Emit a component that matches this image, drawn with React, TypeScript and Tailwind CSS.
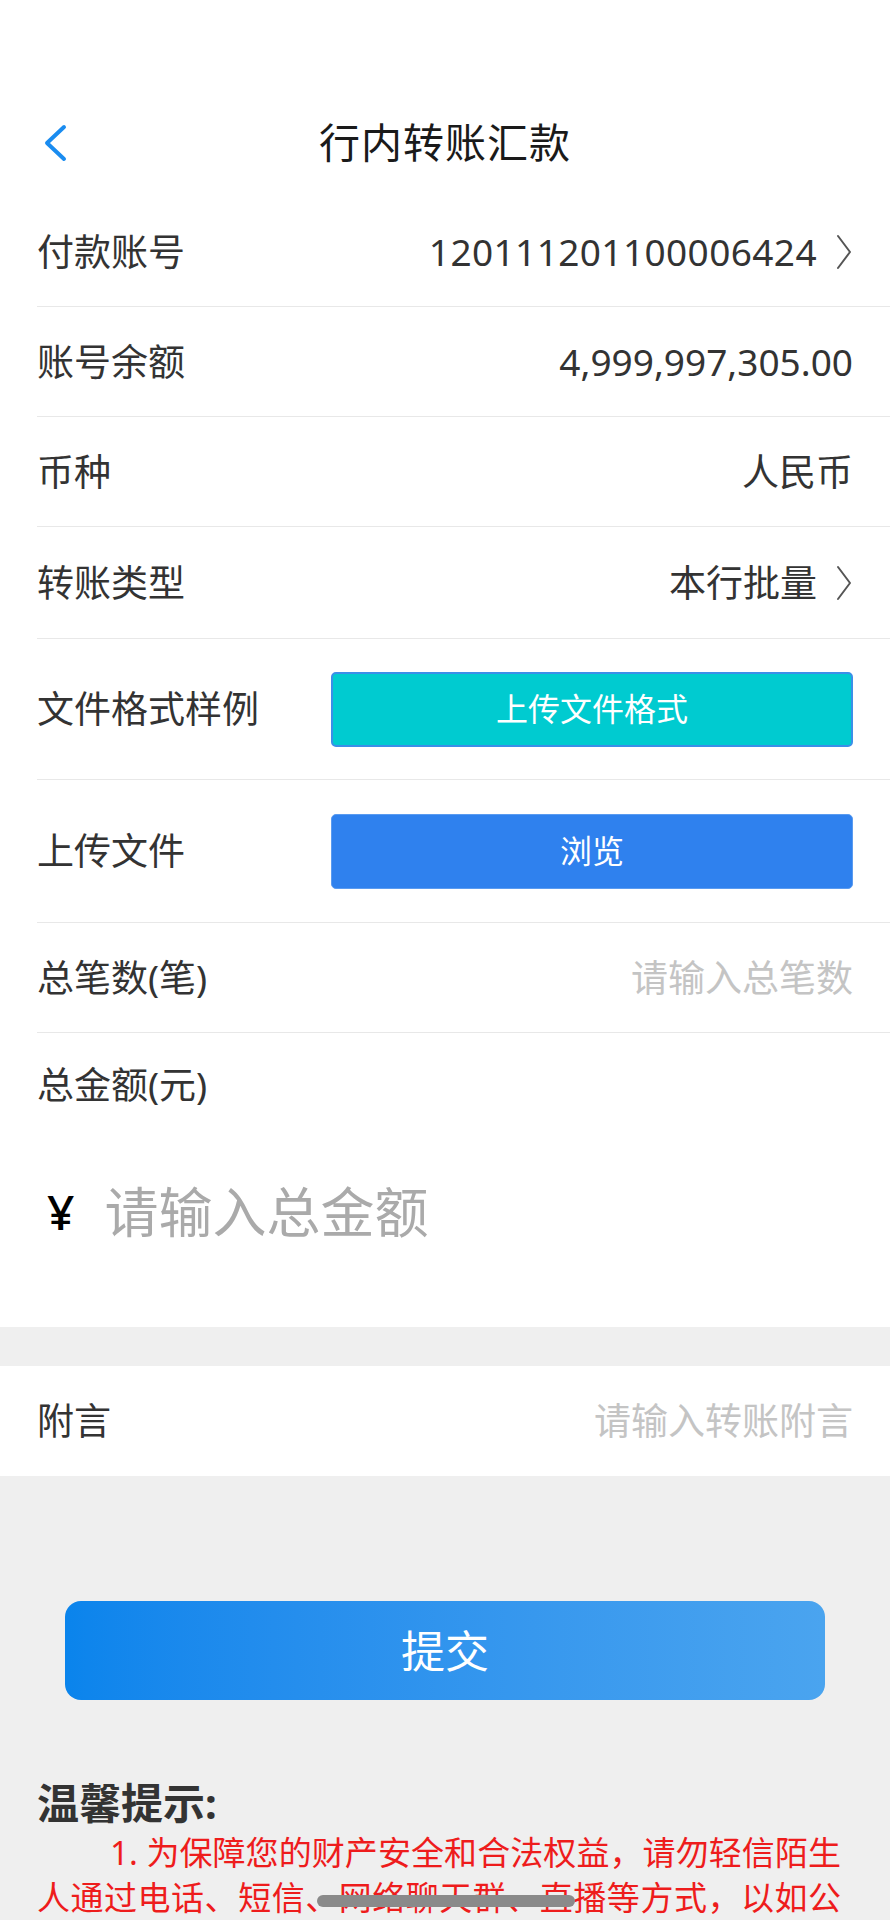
import React from 'react';

const font = { fontFamily: '"Noto Sans", "Noto Sans CJK SC", sans-serif' };

function Chevron() {
  return (
    <svg width="18" height="36" viewBox="0 0 18 36" className="ml-[18px] shrink-0">
      <path d="M3 2 L15 18 L3 34" fill="none" stroke="#555" strokeWidth="2" strokeLinecap="round" strokeLinejoin="round" />
    </svg>
  );
}

function Row({ label, children, h = 'h-[110px]' }: { label: string; children?: React.ReactNode; h?: string }) {
  return (
    <div className={`ml-[37px] pr-[37px] flex items-center justify-between border-b border-[#e8e8e8] ${h}`}>
      <span className="text-[37px] text-[#333] whitespace-nowrap">{label}</span>
      {children}
    </div>
  );
}

export default function App() {
  return (
    <div className="relative h-[1920px] w-[890px] overflow-hidden bg-[#efefef]" style={font}>
      <div className="bg-white">
        <div className="h-[88px]" />
        <header className="relative h-[110px] flex items-center justify-center">
          <svg width="26" height="38" viewBox="0 0 26 38" className="absolute left-[42px] top-[36px]">
            <path d="M22 3 L5 19 L22 35" fill="none" stroke="#1a8cf0" strokeWidth="4" strokeLinecap="round" strokeLinejoin="round" />
          </svg>
          <h1 className="text-[41px] text-[#1a1a1a] tracking-[1px]">行内转账汇款</h1>
        </header>

        <Row label="付款账号" h="h-[109px]">
          <div className="flex items-center text-[37px] text-[#333] tracking-[0.4px]">
            120111201100006424
            <Chevron />
          </div>
        </Row>
        <Row label="账号余额">
          <span className="text-[37px] text-[#333]">4,999,997,305.00</span>
        </Row>
        <Row label="币种">
          <span className="text-[37px] text-[#333]">人民币</span>
        </Row>
        <Row label="转账类型" h="h-[112px]">
          <div className="flex items-center text-[37px] text-[#333]">
            本行批量
            <Chevron />
          </div>
        </Row>
        <Row label="文件格式样例" h="h-[141px]">
          <button className="w-[522px] h-[75px] rounded-[5px] bg-[#00cbd0] border-2 border-[#3b8fe8] text-white text-[32px]">
            上传文件格式
          </button>
        </Row>
        <Row label="上传文件" h="h-[143px]">
          <button className="w-[522px] h-[75px] rounded-[5px] bg-[#2f81ee] border border-[#5a9bf0] text-white text-[32px]">
            浏览
          </button>
        </Row>
        <Row label="总笔数(笔)">
          <span className="text-[37px] text-[#c4c4c4]">请输入总笔数</span>
        </Row>

        <div className="ml-[37px] h-[104px] flex items-center">
          <span className="text-[37px] text-[#333]">总金额(元)</span>
        </div>
        <div className="pb-[40px]">
          <div className="h-[150px] flex items-center pl-[47px]">
            <span className="text-[48px] font-medium text-black">¥</span>
            <span className="ml-[30px] text-[54px] text-[#aaa]">请输入总金额</span>
          </div>
        </div>
      </div>

      <div className="h-[39px]" />

      <div className="bg-white h-[110px] px-[37px] flex items-center justify-between">
        <span className="text-[37px] text-[#333]">附言</span>
        <span className="text-[37px] text-[#c4c4c4]">请输入转账附言</span>
      </div>

      <div className="pt-[125px] px-[65px]">
        <button className="w-full h-[99px] rounded-[16px] bg-gradient-to-r from-[#0a84ec] to-[#4aa4ef] text-white text-[44px]">
          提交
        </button>
      </div>

      <div className="pt-[80px] px-[37px]">
        <h2 className="text-[42px] font-bold text-[#333] leading-[46px]">温馨提示:</h2>
        <div className="mt-[4px] text-[33px] text-[#ee1c1c] leading-[45px] pr-[12px]">
          <p className="pl-[73px] text-justify [text-align-last:justify]">1. 为保障您的财产安全和合法权益，请勿轻信陌生</p>
          <p className="text-justify [text-align-last:justify]">人通过电话、短信、网络聊天群、直播等方式，以如公</p>
          <p>检法、客服等名义要求转账汇款的行为。</p>
        </div>
      </div>

      <div className="absolute left-[317px] top-[1895px] w-[258px] h-[12px] rounded-full bg-[#8a8a8a]" />
    </div>
  );
}
